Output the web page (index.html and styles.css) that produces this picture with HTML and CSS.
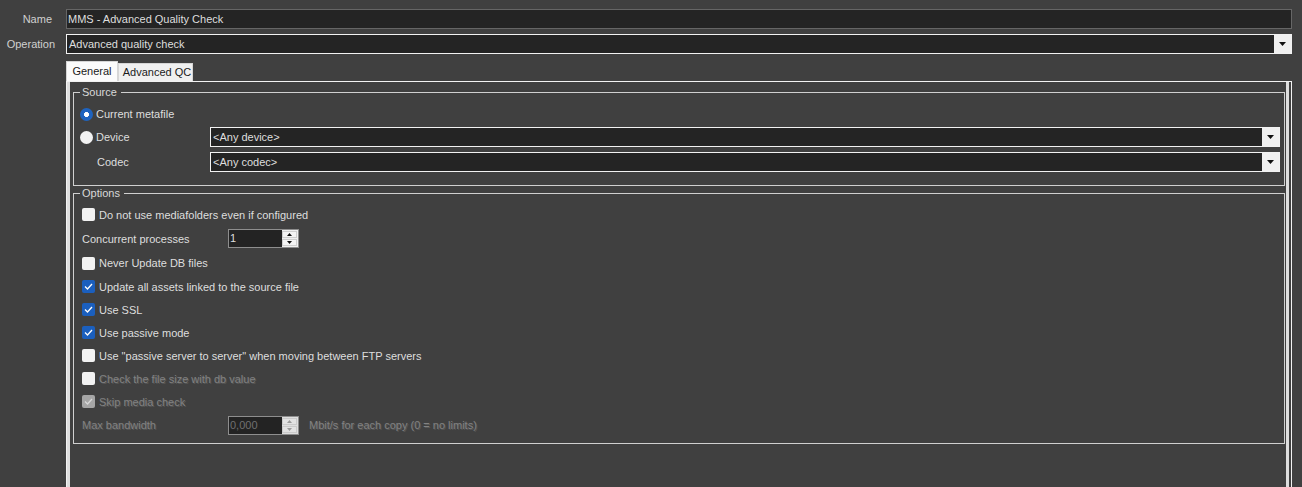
FILE: index.html
```html
<!DOCTYPE html>
<html>
<head>
<meta charset="utf-8">
<title>MMS - Advanced Quality Check</title>
<link rel="stylesheet" href="styles.css">
</head>
<body>
<div class="form">
  <div class="field-row">
    <div class="field-label name">Name</div>
    <div class="textbox">MMS - Advanced Quality Check</div>
  </div>
  <div class="field-row">
    <div class="field-label">Operation</div>
    <div class="combo">
      <span class="combo-text">Advanced quality check</span>
      <span class="combo-btn"><svg width="7" height="4" viewBox="0 0 7 4"><polygon points="0,0 7,0 3.5,4" fill="#111"/></svg></span>
    </div>
  </div>

  <div class="tabs">
    <div class="tab active general">General</div>
    <div class="tab advanced">Advanced QC</div>
  </div>

  <div class="pane">
    <div class="pane-inner">
      <fieldset class="group source">
        <legend>Source</legend>
        <div class="src-body">
          <div class="src-row">
            <span class="radio checked"></span><span>Current metafile</span>
          </div>
          <div class="src-row">
            <div class="src-label"><span class="radio"></span><span>Device</span></div>
            <div class="combo">
              <span class="combo-text">&lt;Any device&gt;</span>
              <span class="combo-btn"><svg width="7" height="4" viewBox="0 0 7 4"><polygon points="0,0 7,0 3.5,4" fill="#111"/></svg></span>
            </div>
          </div>
          <div class="src-row codec">
            <div class="src-label indent">Codec</div>
            <div class="combo">
              <span class="combo-text">&lt;Any codec&gt;</span>
              <span class="combo-btn"><svg width="7" height="4" viewBox="0 0 7 4"><polygon points="0,0 7,0 3.5,4" fill="#111"/></svg></span>
            </div>
          </div>
        </div>
      </fieldset>

      <fieldset class="group options">
        <legend>Options</legend>
        <div class="opt-body">
          <div class="opt-row"><span class="check"></span><span>Do not use mediafolders even if configured</span></div>
          <div class="opt-row tall">
            <span class="opt-label">Concurrent processes</span>
            <div class="spin">
              <span class="spin-value">1</span>
              <span class="spin-btns">
                <span class="spin-btn"><svg width="5" height="3" viewBox="0 0 5 3"><polygon points="2.5,0 5,3 0,3" fill="#111"/></svg></span>
                <span class="spin-btn"><svg width="5" height="3" viewBox="0 0 5 3"><polygon points="0,0 5,0 2.5,3" fill="#111"/></svg></span>
              </span>
            </div>
          </div>
          <div class="opt-row mid"><span class="check"></span><span>Never Update DB files</span></div>
          <div class="opt-row"><span class="check on"><svg width="9" height="7" viewBox="0 0 9 7"><polyline points="1,3.5 3.5,6 8,1" fill="none" stroke="#fff" stroke-width="1.3"/></svg></span><span>Update all assets linked to the source file</span></div>
          <div class="opt-row"><span class="check on"><svg width="9" height="7" viewBox="0 0 9 7"><polyline points="1,3.5 3.5,6 8,1" fill="none" stroke="#fff" stroke-width="1.3"/></svg></span><span>Use SSL</span></div>
          <div class="opt-row"><span class="check on"><svg width="9" height="7" viewBox="0 0 9 7"><polyline points="1,3.5 3.5,6 8,1" fill="none" stroke="#fff" stroke-width="1.3"/></svg></span><span>Use passive mode</span></div>
          <div class="opt-row"><span class="check"></span><span>Use "passive server to server" when moving between FTP servers</span></div>
          <div class="opt-row disabled"><span class="check"></span><span>Check the file size with db value</span></div>
          <div class="opt-row disabled"><span class="check dim"><svg width="9" height="7" viewBox="0 0 9 7"><polyline points="1,3.5 3.5,6 8,1" fill="none" stroke="#d8d8d8" stroke-width="1.3"/></svg></span><span>Skip media check</span></div>
          <div class="opt-row mid disabled">
            <span class="opt-label">Max bandwidth</span>
            <div class="spin off">
              <span class="spin-value">0,000</span>
              <span class="spin-btns">
                <span class="spin-btn"><svg width="5" height="3" viewBox="0 0 5 3"><polygon points="2.5,0 5,3 0,3" fill="#9a9a9a"/></svg></span>
                <span class="spin-btn"><svg width="5" height="3" viewBox="0 0 5 3"><polygon points="0,0 5,0 2.5,3" fill="#9a9a9a"/></svg></span>
              </span>
            </div>
            <span class="unit">Mbit/s for each copy (0 = no limits)</span>
          </div>
        </div>
      </fieldset>
    </div>
  </div>
</div>
</body>
</html>
```

FILE: styles.css
```css
* { box-sizing: border-box; }

html, body {
  margin: 0;
  height: 100%;
  overflow: hidden;
}

body {
  background: #404040;
  font-family: "Liberation Sans", Arial, sans-serif;
  font-size: 11px;
  color: #dedede;
}

.form {
  padding: 9px 10px 0 0;
}

.field-row {
  display: flex;
  align-items: center;
  height: 20px;
}

.field-row + .field-row {
  margin-top: 5px;
}

.field-label {
  width: 66px;
  padding-right: 11px;
  text-align: right;
  color: #d0d0d0;
}

.field-label.name {
  padding-right: 14px;
}

.textbox {
  flex: 1;
  height: 20px;
  border: 1px solid #666;
  background: #242424;
  padding: 0 1px;
  line-height: 18px;
  white-space: nowrap;
}

.combo {
  flex: 1;
  display: flex;
  height: 20px;
  border: 1px solid #f2f2f2;
  background: #242424;
}

.combo-text {
  flex: 1;
  padding-left: 2px;
  line-height: 18px;
  white-space: nowrap;
}

.combo-btn {
  width: 17px;
  background: #f0f0f0;
  display: flex;
  align-items: center;
  justify-content: center;
}

/* tabs */
.tabs {
  display: flex;
  align-items: flex-end;
  height: 20px;
  margin: 7px 0 0 66px;
}

.tab {
  height: 18px;
  line-height: 17px;
  text-align: center;
  color: #1a1a1a;
  background: #f0f0f0;
  border: 1px solid #d6d6d6;
  border-bottom: none;
}

.tab.active {
  height: 20px;
  line-height: 19px;
  background: #fbfbfb;
}

.tab.general { width: 52px; }
.tab.advanced { width: 75px; padding-left: 3px; }

/* pane */
.pane {
  display: flex;
  height: 430px;
  margin-left: 66px;
  border: 1px solid #f2f2f2;
  border-bottom: none;
}

.pane-inner {
  flex: 1;
  margin-right: 2px;
  padding: 0 1px 0 3px;
  border-left: 3px solid #dedede;
  border-right: 3px solid #dedede;
}

.group {
  margin: 0;
  padding: 0;
  min-width: 0;
  border: 1px solid #d0d0d0;
}

.group.source {
  margin-top: 3px;
}

.group legend {
  margin-left: 6px;
  padding: 0 4px 0 2px;
  line-height: 14px;
  color: #d8d8d8;
}

/* source */
.src-body {
  padding: 5px 4px 13px 6px;
}

.src-row {
  display: flex;
  align-items: center;
  height: 20px;
  gap: 3px;
}

.src-row + .src-row { margin-top: 3px; }
.src-row.codec { margin-top: 5px; }

.src-label {
  flex: 0 0 130px;
  display: flex;
  align-items: center;
  gap: 3px;
  margin-right: -3px;
}

.src-label.indent {
  padding-left: 17px;
}

.radio {
  width: 13px;
  height: 13px;
  border-radius: 50%;
  background: #f2f2f2;
  flex: none;
}

.radio.checked {
  background: radial-gradient(circle, #fff 0 2.2px, #1e63bf 2.8px);
}

/* options */
.opt-body {
  padding: 3px 4px 6px 8px;
}

.opt-row {
  display: flex;
  align-items: center;
  height: 23px;
  gap: 4px;
  white-space: nowrap;
}

.opt-row.tall { height: 25px; gap: 0; }
.opt-row.mid { height: 24px; }

.opt-label {
  width: 146px;
  flex: none;
}

.check {
  width: 13px;
  height: 13px;
  border-radius: 2px;
  background: #f2f2f2;
  flex: none;
  display: flex;
  align-items: center;
  justify-content: center;
}

.check.on { background: #1b5fbe; }
.check.dim { background: #a6a6a6; }

.opt-row.disabled {
  color: #828282;
  text-shadow: 1px 1px 0 #575757;
}

.opt-row.disabled .opt-label { margin-right: -4px; }

.spin {
  display: flex;
  width: 71px;
  height: 19px;
  border: 1px solid #8e8e8e;
  background: #232323;
  flex: none;
  text-shadow: none;
}

.spin-value {
  flex: 1;
  padding-left: 1px;
  line-height: 17px;
}

.spin-btns {
  width: 16px;
  display: flex;
  flex-direction: column;
  background: #f0f0f0;
  padding: 1px 1px 1px 0;
  gap: 1px;
}

.spin-btn {
  flex: 1;
  display: flex;
  align-items: center;
  justify-content: center;
  border: 1px solid #cfcfcf;
  background: #f4f4f4;
}

.spin.off .spin-value { color: #707070; }
.spin.off .spin-btns { background: #dedede; }
.spin.off .spin-btn { background: #e2e2e2; border-color: #cacaca; }

.unit {
  margin-left: 6px;
}
```
